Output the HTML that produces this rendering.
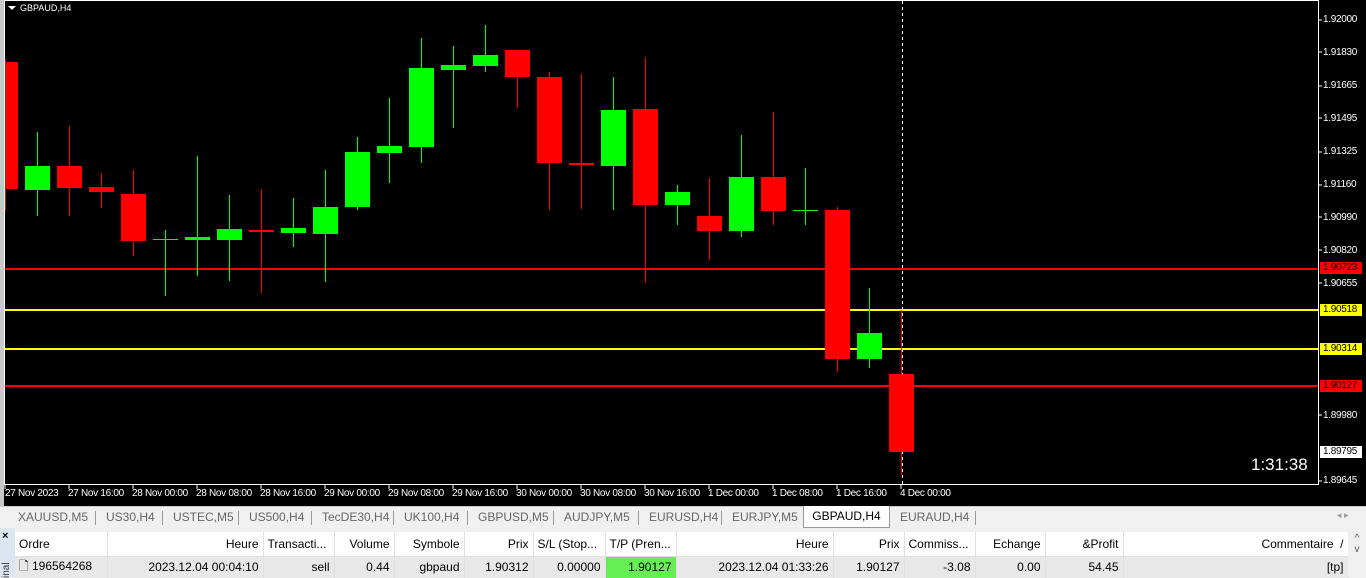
<!DOCTYPE html>
<html><head><meta charset="utf-8"><style>
*{margin:0;padding:0;box-sizing:border-box}
body{width:1366px;height:577px;overflow:hidden;background:#f0f0f0;font-family:"Liberation Sans",sans-serif;position:relative}
.ax{position:absolute;font-size:10px;color:#fff}
.tl{position:absolute;top:488px;font-size:10px;color:#fff;letter-spacing:-0.3px}
.pl{position:absolute;left:1323px;font-size:10px;color:#fff;letter-spacing:-0.3px}
.tag{position:absolute;left:1320px;width:42px;height:12px;font-size:10px;line-height:12px;padding-left:3px;letter-spacing:-0.3px}
#tabs{position:absolute;top:506px;left:0;width:1366px;height:22px;background:#f0f0f0;border-top:1px solid #ccc;font-size:12px;color:#666}
#tabs span{position:absolute;top:3px}
#tabs i{position:absolute;top:4px;width:1px;height:14px;background:#999}
table{position:absolute;left:15px;top:532px;border-collapse:collapse;font-size:12px;color:#000}
td{height:24px;border-right:1px solid #e0e0e0;padding:0 4px;white-space:nowrap;overflow:hidden}
tr.h td{background:#fff;border-bottom:1px solid #e0e0e0}
tr.r td{background:#e8e8e8;height:19px}
</style></head><body>
<div style="position:absolute;left:0;top:0;width:4px;height:506px;background:#c8c8c8"></div>
<div style="position:absolute;left:4px;top:0;width:1362px;height:506px;background:#000"></div>
<svg style="position:absolute;left:0;top:0" width="1366" height="506">
<rect x="4.5" y="0.5" width="1314" height="484" fill="none" stroke="#fff"/>
<g stroke="#fff"><line x1="1318" y1="20" x2="1322" y2="20"/><line x1="1318" y1="52" x2="1322" y2="52"/><line x1="1318" y1="86" x2="1322" y2="86"/><line x1="1318" y1="118" x2="1322" y2="118"/><line x1="1318" y1="152" x2="1322" y2="152"/><line x1="1318" y1="185" x2="1322" y2="185"/><line x1="1318" y1="217" x2="1322" y2="217"/><line x1="1318" y1="250" x2="1322" y2="250"/><line x1="1318" y1="283" x2="1322" y2="283"/><line x1="1318" y1="415" x2="1322" y2="415"/><line x1="1318" y1="481" x2="1322" y2="481"/></g>
<g stroke="#fff"><line x1="5" y1="485" x2="5" y2="489"/><line x1="69" y1="485" x2="69" y2="489"/><line x1="133" y1="485" x2="133" y2="489"/><line x1="197" y1="485" x2="197" y2="489"/><line x1="261" y1="485" x2="261" y2="489"/><line x1="325" y1="485" x2="325" y2="489"/><line x1="389" y1="485" x2="389" y2="489"/><line x1="453" y1="485" x2="453" y2="489"/><line x1="517" y1="485" x2="517" y2="489"/><line x1="581" y1="485" x2="581" y2="489"/><line x1="645" y1="485" x2="645" y2="489"/><line x1="709" y1="485" x2="709" y2="489"/><line x1="773" y1="485" x2="773" y2="489"/><line x1="837" y1="485" x2="837" y2="489"/><line x1="901" y1="485" x2="901" y2="489"/></g>
<rect x="5" y="268" width="1313" height="2" fill="#f00"/>
<rect x="5" y="309" width="1313" height="2" fill="#ff0"/>
<rect x="5" y="348" width="1313" height="2" fill="#ff0"/>
<rect x="5" y="385" width="1313" height="2" fill="#f00"/>
<line x1="902.5" y1="1" x2="902.5" y2="484" stroke="#fff" stroke-dasharray="3,3"/>
<g stroke-width="1">
<g stroke="#f00"><line x1="5.5" y1="59" x2="5.5" y2="210"/><line x1="69.5" y1="126" x2="69.5" y2="216"/><line x1="101.5" y1="173" x2="101.5" y2="208"/><line x1="133.5" y1="170" x2="133.5" y2="256"/><line x1="261.5" y1="189" x2="261.5" y2="293"/><line x1="517.5" y1="50" x2="517.5" y2="108"/><line x1="549.5" y1="72" x2="549.5" y2="210"/><line x1="581.5" y1="74" x2="581.5" y2="209"/><line x1="645.5" y1="57" x2="645.5" y2="283"/><line x1="709.5" y1="178" x2="709.5" y2="260"/><line x1="773.5" y1="112" x2="773.5" y2="225"/><line x1="837.5" y1="207" x2="837.5" y2="372"/><line x1="901.5" y1="310" x2="901.5" y2="475"/></g>
<g stroke="#0f0"><line x1="37.5" y1="132" x2="37.5" y2="216"/><line x1="165.5" y1="230" x2="165.5" y2="296"/><line x1="197.5" y1="156" x2="197.5" y2="276"/><line x1="229.5" y1="195" x2="229.5" y2="281"/><line x1="293.5" y1="198" x2="293.5" y2="247"/><line x1="325.5" y1="170" x2="325.5" y2="282"/><line x1="357.5" y1="137" x2="357.5" y2="210"/><line x1="389.5" y1="98" x2="389.5" y2="183"/><line x1="421.5" y1="38" x2="421.5" y2="163"/><line x1="453.5" y1="46" x2="453.5" y2="128"/><line x1="485.5" y1="25" x2="485.5" y2="72"/><line x1="613.5" y1="77" x2="613.5" y2="210"/><line x1="677.5" y1="185" x2="677.5" y2="225"/><line x1="741.5" y1="135" x2="741.5" y2="237"/><line x1="805.5" y1="168" x2="805.5" y2="225"/><line x1="869.5" y1="288" x2="869.5" y2="368"/></g>
</g>
<g fill="#f00"><rect x="5" y="62" width="13" height="127"/><rect x="57" y="166" width="25" height="22"/><rect x="89" y="187" width="25" height="5"/><rect x="121" y="194" width="25" height="47"/><rect x="249" y="230" width="25" height="2"/><rect x="505" y="50" width="25" height="27"/><rect x="537" y="77" width="25" height="86"/><rect x="569" y="163" width="25" height="2"/><rect x="633" y="109" width="25" height="96"/><rect x="697" y="216" width="25" height="15"/><rect x="761" y="177" width="25" height="34"/><rect x="825" y="210" width="25" height="149"/><rect x="889" y="374" width="25" height="78"/></g>
<g fill="#0f0"><rect x="25" y="166" width="25" height="24"/><rect x="153" y="239" width="25" height="1"/><rect x="185" y="237" width="25" height="3"/><rect x="217" y="229" width="25" height="11"/><rect x="281" y="228" width="25" height="5"/><rect x="313" y="207" width="25" height="27"/><rect x="345" y="152" width="25" height="55"/><rect x="377" y="146" width="25" height="7"/><rect x="409" y="68" width="25" height="79"/><rect x="441" y="65" width="25" height="5"/><rect x="473" y="55" width="25" height="11"/><rect x="601" y="110" width="25" height="56"/><rect x="665" y="192" width="25" height="13"/><rect x="729" y="177" width="25" height="54"/><rect x="793" y="210" width="25" height="1"/><rect x="857" y="333" width="25" height="26"/></g>
<polygon points="8,6 16,6 12,10" fill="#fff"/>
</svg>
<div class="ax" style="left:20px;top:3px;font-size:9px">GBPAUD,H4</div>
<div class="pl" style="top:14px">1.92000</div><div class="pl" style="top:47px">1.91830</div><div class="pl" style="top:80px">1.91665</div><div class="pl" style="top:113px">1.91495</div><div class="pl" style="top:146px">1.91325</div><div class="pl" style="top:179px">1.91160</div><div class="pl" style="top:212px">1.90990</div><div class="pl" style="top:245px">1.90820</div><div class="pl" style="top:278px">1.90655</div><div class="pl" style="top:410px">1.89980</div><div class="pl" style="top:475px">1.89645</div>
<div class="tag" style="top:262px;background:#f00;color:#000">1.90723</div>
<div class="tag" style="top:304px;background:#ff0;color:#000">1.90518</div>
<div class="tag" style="top:343px;background:#ff0;color:#000">1.90314</div>
<div class="tag" style="top:380px;background:#f00;color:#000">1.90127</div>
<div class="tag" style="top:446px;background:#fff;color:#000">1.89795</div>
<div class="ax" style="left:1251px;top:455px;font-size:17px">1:31:38</div>
<div class="tl" style="left:5px">27 Nov 2023</div><div class="tl" style="left:68px">27 Nov 16:00</div><div class="tl" style="left:132px">28 Nov 00:00</div><div class="tl" style="left:196px">28 Nov 08:00</div><div class="tl" style="left:260px">28 Nov 16:00</div><div class="tl" style="left:324px">29 Nov 00:00</div><div class="tl" style="left:388px">29 Nov 08:00</div><div class="tl" style="left:452px">29 Nov 16:00</div><div class="tl" style="left:516px">30 Nov 00:00</div><div class="tl" style="left:580px">30 Nov 08:00</div><div class="tl" style="left:644px">30 Nov 16:00</div><div class="tl" style="left:708px">1 Dec 00:00</div><div class="tl" style="left:772px">1 Dec 08:00</div><div class="tl" style="left:836px">1 Dec 16:00</div><div class="tl" style="left:900px">4 Dec 00:00</div>
<div id="tabs">
<span style="left:18px">XAUUSD,M5</span><i style="left:95px"></i>
<span style="left:106px">US30,H4</span><i style="left:162px"></i>
<span style="left:173px">USTEC,M5</span><i style="left:238px"></i>
<span style="left:249px">US500,H4</span><i style="left:311px"></i>
<span style="left:322px">TecDE30,H4</span><i style="left:393px"></i>
<span style="left:404px">UK100,H4</span><i style="left:467px"></i>
<span style="left:478px">GBPUSD,M5</span><i style="left:553px"></i>
<span style="left:564px">AUDJPY,M5</span><i style="left:638px"></i>
<span style="left:649px">EURUSD,H4</span><i style="left:721px"></i>
<span style="left:732px">EURJPY,M5</span>
<div style="position:absolute;left:803px;top:-1px;width:87px;height:22px;background:#fff;border:1px solid #999;border-top:none;color:#000;font-size:12px;text-align:center;padding-top:3px">GBPAUD,H4</div>
<span style="left:900px">EURAUD,H4</span><i style="left:975px"></i>
<span style="left:1337px;font-size:9px;color:#999">◂ ▸</span>
</div>
<div style="position:absolute;left:0;top:528px;width:15px;height:49px;background:#dce6f0"></div>
<div style="position:absolute;left:2px;top:530px;font-size:11px;font-weight:bold">×</div>
<div style="position:absolute;left:1px;top:560px;font-size:10px;color:#333;transform:rotate(-90deg);transform-origin:left top;width:20px;top:578px">inal</div>
<table>
<tr class="h"><td style="width:92px">Ordre</td><td style="width:156px;text-align:right">Heure</td><td style="width:71px">Transacti...</td><td style="width:60px;text-align:right">Volume</td><td style="width:70px;text-align:right">Symbole</td><td style="width:69px;text-align:right">Prix</td><td style="width:72px">S/L (Stop...</td><td style="width:71px">T/P (Pren...</td><td style="width:157px;text-align:right">Heure</td><td style="width:71px;text-align:right">Prix</td><td style="width:71px">Commiss...</td><td style="width:70px;text-align:right">Echange</td><td style="width:78px;text-align:right">&amp;Profit</td><td style="width:225px;text-align:right">Commentaire &nbsp;/</td></tr>
<tr class="r"><td>&#128459; 196564268</td><td style="text-align:right">2023.12.04 00:04:10</td><td style="text-align:right">sell</td><td style="text-align:right">0.44</td><td style="text-align:right">gbpaud</td><td style="text-align:right">1.90312</td><td style="text-align:right">0.00000</td><td style="text-align:right;background:#66ee55">1.90127</td><td style="text-align:right">2023.12.04 01:33:26</td><td style="text-align:right">1.90127</td><td style="text-align:right">-3.08</td><td style="text-align:right">0.00</td><td style="text-align:right">54.45</td><td style="text-align:right">[tp]</td></tr>
</table>
<div style="position:absolute;left:1348px;top:533px;width:18px;height:44px;background:#f0f0f0;font-size:10px;color:#555;text-align:center">^<br>v</div>
</body></html>
